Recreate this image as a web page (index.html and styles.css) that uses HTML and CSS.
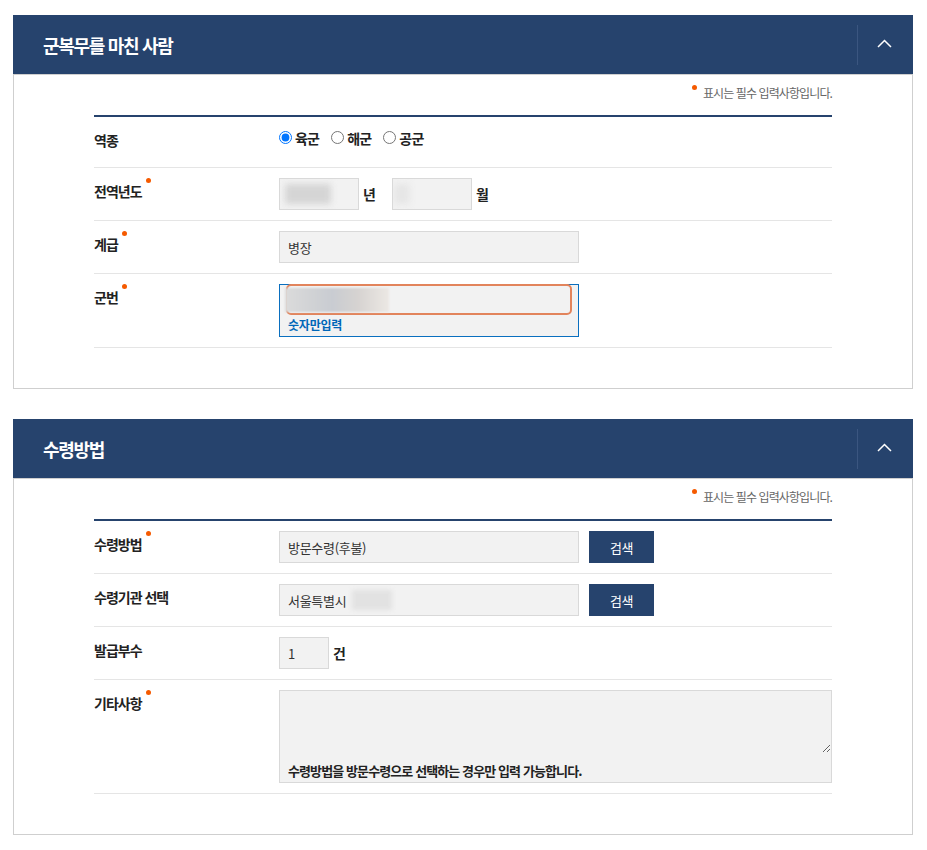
FILE: index.html
```html
<!DOCTYPE html>
<html lang="ko">
<head>
<meta charset="utf-8">
<title>군복무를 마친 사람 / 수령방법</title>
<link rel="stylesheet" href="styles.css">
</head>
<body>
<div class="page">
  <section class="panel">
    <div class="panel-head">
      <h2 class="panel-title">군복무를 마친 사람</h2>
      <button class="toggle" type="button" aria-label="접기">
        <svg width="15" height="9" viewBox="0 0 15 9"><polyline points="1,8 7.5,1.5 14,8" fill="none" stroke="#fff" stroke-width="1.5"/></svg>
      </button>
    </div>
    <div class="panel-body">
      <p class="req-note"><span class="dot"></span>표시는 필수 입력사항입니다.</p>
      <div class="form-table">
        <div class="row">
          <div class="label">역종</div>
          <div class="value radios">
            <label class="radio"><input type="radio" name="army" checked>육군</label>
            <label class="radio"><input type="radio" name="army">해군</label>
            <label class="radio"><input type="radio" name="army">공군</label>
          </div>
        </div>
        <div class="row">
          <div class="label">전역년도<span class="req"></span></div>
          <div class="value">
            <div class="field w80"><span class="blob blob-year"></span></div>
            <span class="unit gap-after">년</span>
            <div class="field w80"><span class="blob blob-month"></span></div>
            <span class="unit">월</span>
          </div>
        </div>
        <div class="row">
          <div class="label">계급<span class="req"></span></div>
          <div class="value">
            <div class="field w300">병장</div>
          </div>
        </div>
        <div class="row">
          <div class="label">군번<span class="req"></span></div>
          <div class="value">
            <div class="num-box">
              <div class="num-input"><span class="blob-num"></span></div>
              <p class="num-hint">숫자만입력</p>
            </div>
          </div>
        </div>
      </div>
    </div>
  </section>

  <section class="panel">
    <div class="panel-head">
      <h2 class="panel-title">수령방법</h2>
      <button class="toggle" type="button" aria-label="접기">
        <svg width="15" height="9" viewBox="0 0 15 9"><polyline points="1,8 7.5,1.5 14,8" fill="none" stroke="#fff" stroke-width="1.5"/></svg>
      </button>
    </div>
    <div class="panel-body">
      <p class="req-note"><span class="dot"></span>표시는 필수 입력사항입니다.</p>
      <div class="form-table">
        <div class="row">
          <div class="label">수령방법<span class="req"></span></div>
          <div class="value">
            <div class="field w300">방문수령(후불)</div>
            <button class="btn" type="button">검색</button>
          </div>
        </div>
        <div class="row">
          <div class="label">수령기관 선택</div>
          <div class="value">
            <div class="field w300">서울특별시<span class="blob blob-org"></span></div>
            <button class="btn" type="button">검색</button>
          </div>
        </div>
        <div class="row">
          <div class="label">발급부수</div>
          <div class="value">
            <div class="field w50">1</div>
            <span class="unit">건</span>
          </div>
        </div>
        <div class="row">
          <div class="label">기타사항<span class="req"></span></div>
          <div class="value">
            <div class="memo">
              <textarea class="memo-area" aria-label="기타사항"></textarea>
              <p class="memo-note">수령방법을 방문수령으로 선택하는 경우만 입력 가능합니다.</p>
            </div>
          </div>
        </div>
      </div>
    </div>
  </section>
</div>
</body>
</html>
```

FILE: styles.css
```css
body {
  margin: 0;
  background: #fff;
  color: #222;
  font-family: "Noto Sans CJK KR", "Noto Sans", sans-serif;
}

.page {
  padding: 15px 14px 0 13px;
}

.panel + .panel {
  margin-top: 30px;
}

.panel-head {
  height: 59px;
  background: #26436d;
  display: flex;
  align-items: center;
  padding-left: 30px;
}

.panel-title {
  flex: 1;
  margin: 0;
  color: #fff;
  font-size: 18px;
  font-weight: 700;
  line-height: 26px;
  letter-spacing: -1.3px;
}

.toggle {
  width: 56px;
  height: 40px;
  padding: 0;
  border: 0;
  border-left: 1px solid #3b5680;
  background: transparent;
  display: flex;
  align-items: center;
  justify-content: center;
}

.toggle svg {
  display: block;
  margin-top: -2px;
  margin-right: 2px;
}

.panel-body {
  border: 1px solid #cfcfcf;
  padding: 8px 80px 40px;
}

.req-note {
  margin: 0 0 12px;
  text-align: right;
  font-size: 12px;
  line-height: 20px;
  color: #666;
  letter-spacing: -0.9px;
}

.req-note .dot {
  display: inline-block;
  width: 5px;
  height: 5px;
  border-radius: 50%;
  background: #f55a00;
  vertical-align: top;
  margin: 2px 6px 0 0;
}

.form-table {
  border-top: 2px solid #26436d;
}

.row {
  display: flex;
  padding: 10px 0;
  border-bottom: 1px solid #e5e5e5;
}

.label {
  width: 185px;
  flex: none;
  font-size: 14px;
  font-weight: 700;
  line-height: 26px;
  letter-spacing: -1px;
  color: #222;
}

.req {
  display: inline-block;
  width: 5px;
  height: 5px;
  border-radius: 50%;
  background: #f55a00;
  vertical-align: top;
  margin-left: 4px;
}

.value {
  flex: 1;
  display: flex;
  align-items: center;
}

.radios {
  height: 30px;
  align-items: flex-start;
}

.radio {
  display: inline-flex;
  align-items: center;
  height: 21px;
  margin-right: 12px;
  font-size: 14px;
  font-weight: 700;
  letter-spacing: -0.8px;
  color: #222;
}

.radio input {
  width: 13px;
  height: 13px;
  margin: 0 3px 0 0;
}

.field {
  height: 32px;
  box-sizing: border-box;
  border: 1px solid #d9d9d9;
  background: #f2f2f2;
  display: flex;
  align-items: center;
  padding: 0 8px;
  font-size: 13px;
  color: #333;
  letter-spacing: -0.3px;
  overflow: hidden;
}

.w80 { width: 80px; }
.w300 { width: 300px; }
.w50 { width: 50px; }

.unit {
  margin-left: 4px;
  font-size: 14px;
  font-weight: 700;
  color: #222;
}

.gap-after {
  margin-right: 16px;
}

.blob {
  display: inline-block;
  height: 20px;
  flex: none;
}

.blob-year {
  width: 46px;
  margin-left: -3px;
  background: #d5d5d5;
  filter: blur(3px);
}

.blob-month {
  width: 16px;
  margin-left: -7px;
  background: #e6e6e6;
  filter: blur(3px);
}

.blob-org {
  width: 40px;
  margin-left: 6px;
  background: #e2e2e2;
  filter: blur(2px);
}

.num-box {
  width: 300px;
  height: 53px;
  box-sizing: border-box;
  border: 1px solid #0a6fbf;
  background: #f2f2f2;
}

.num-input {
  position: relative;
  height: 31px;
  box-sizing: border-box;
  margin: -1px 6px 0;
  border: 2px solid #e2845c;
  border-radius: 5px;
  background: #f2f2f2;
}

.blob-num {
  position: absolute;
  left: -3px;
  top: 2px;
  width: 104px;
  height: 24px;
  background: linear-gradient(90deg, #dbdbdb 0%, #cfd1d4 30%, #c9ccd2 45%, #d6d3d1 70%, #ece8e4 100%);
  filter: blur(1px);
}

.num-hint {
  margin: 0;
  padding-left: 8px;
  font-size: 12px;
  font-weight: 700;
  line-height: 20px;
  letter-spacing: -0.2px;
  color: #0067b8;
}

.btn {
  width: 65px;
  height: 32px;
  margin-left: 10px;
  border: 0;
  background: #26436d;
  color: #fff;
  font-family: inherit;
  font-size: 13px;
  letter-spacing: -0.5px;
  padding: 0;
}

.memo {
  flex: 1;
  height: 93px;
  box-sizing: border-box;
  border: 1px solid #d9d9d9;
  background: #f2f2f2;
}

.memo-area {
  display: block;
  width: 100%;
  height: 62px;
  box-sizing: border-box;
  border: 0;
  background: transparent;
  padding: 4px 8px;
  font-family: inherit;
  font-size: 13px;
  outline: none;
}

.memo-note {
  margin: 8px 0 0;
  padding-left: 8px;
  font-size: 13px;
  font-weight: 700;
  line-height: 20px;
  letter-spacing: -0.9px;
  color: #222;
}
```
